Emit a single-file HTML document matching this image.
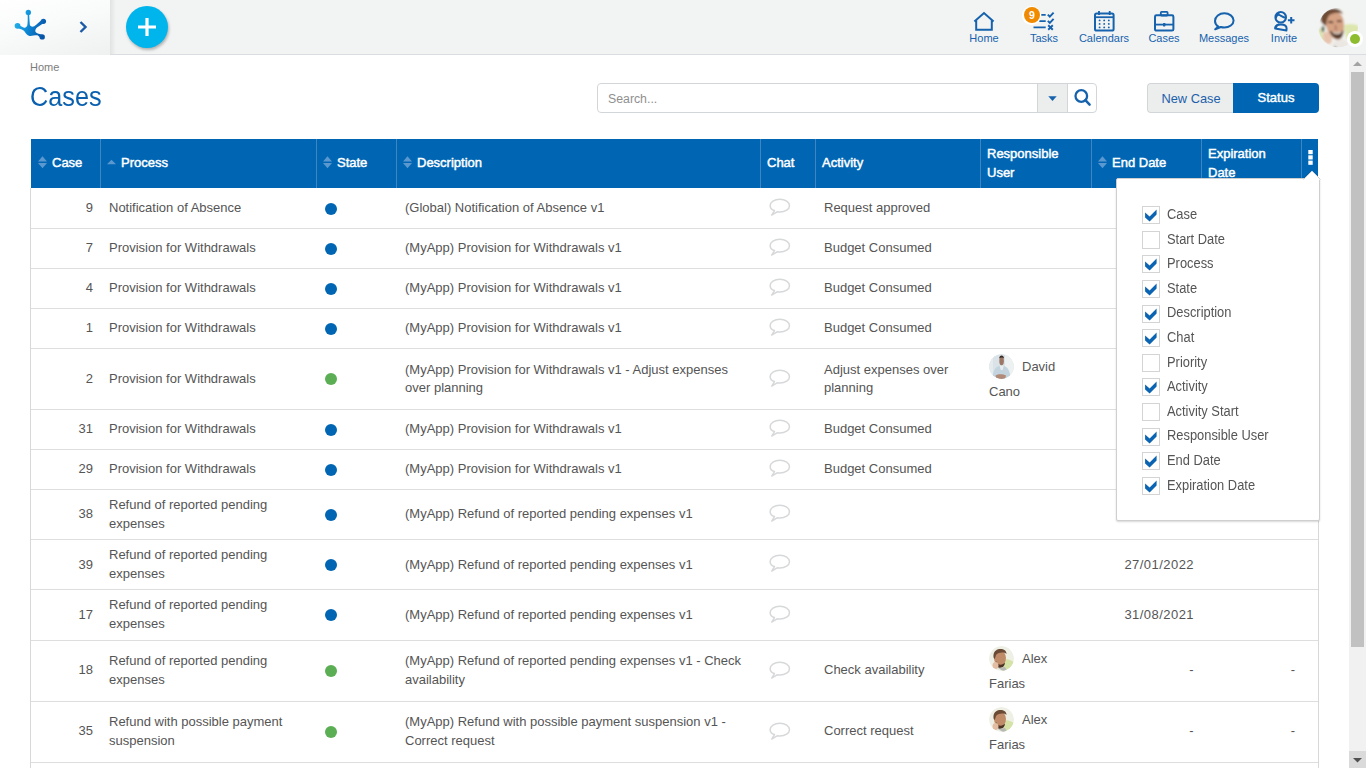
<!DOCTYPE html>
<html><head><meta charset="utf-8"><style>
*{box-sizing:border-box;margin:0;padding:0}
html,body{width:1366px;height:768px;overflow:hidden;background:#fff;font-family:"Liberation Sans",sans-serif;color:#555}
.abs{position:absolute}
#topbar{position:absolute;left:0;top:0;width:1366px;height:55px;background:#f2f4f4;border-bottom:1px solid #d8dde1}
#leftpanel{position:absolute;left:0;top:0;width:110px;height:55px;background:linear-gradient(165deg,#ffffff 0%,#f9fafa 45%,#eff1f1 100%)}
.nav{position:absolute;top:0;width:60px;height:54px;text-align:center;color:#1662ad;font-size:11px}
.nav svg{position:absolute;top:11px}
.nav span{position:absolute;left:0;right:0;top:32px;text-align:center;line-height:12px}
#crumb{left:30px;top:61px;font-size:11px;color:#7d7d7d;line-height:13px}
#title{left:30px;top:81.6px;font-size:27px;transform:scaleX(0.935);transform-origin:0 0;color:#0a60ae;line-height:30px;white-space:nowrap}
#search{left:597px;top:83px;width:500px;height:30px;border:1px solid #d3d6d9;border-radius:4px;background:#fff}
#search .ph{position:absolute;left:10px;top:8px;font-size:12.3px;color:#8f8f8f;line-height:15px}
#search .dd{position:absolute;left:439px;top:0;width:31px;height:28px;background:#eceeee;border-left:1px solid #d3d6d9;border-right:1px solid #d3d6d9}
#btns{left:1147px;top:83px;width:172px;height:30px}
#newcase{position:absolute;left:0;top:0;width:87px;height:30px;background:#eceeee;border:1px solid #d3d6d9;border-right:none;border-radius:4px 0 0 4px;color:#1b60aa;font-size:12.8px;text-align:center;line-height:29.5px}
#status{position:absolute;left:86px;top:0;width:86px;height:30px;background:#0066b3;border-radius:0 4px 4px 0;color:#fff;font-size:13px;text-align:center;line-height:30px;-webkit-text-stroke:0.4px #fff}
#thead{left:31px;top:139px;width:1287px;height:49px;background:#0066b3}
.th{position:absolute;top:0;height:49px;border-right:1px solid #3f85c2;color:#fff;font-weight:normal;font-size:13px;-webkit-text-stroke:0.45px #fff}
.th .l{position:absolute;top:16px;line-height:15px;white-space:nowrap}
.th .l2{position:absolute;top:4.5px;line-height:19px;white-space:nowrap}
.sort{position:absolute;top:16.6px}
#tbody{left:30px;top:188px;width:1289px;height:580px;border-left:1px solid #d8d8d8;border-right:1px solid #d8d8d8}
.row{position:absolute;left:0;width:1287px;border-bottom:1px solid #dedede}
.c{position:absolute;font-size:13px;color:#555;line-height:19px;white-space:nowrap}
.dot{position:absolute;width:12px;height:12px;border-radius:50%}
.blue{background:#0066b3}
.green{background:#5cae55}
#scroll{left:1349px;top:55px;width:17px;height:713px;background:#f1f1f1}
#thumb{left:1351px;top:72px;width:13px;height:575px;background:#c1c1c1}
#menu{left:1116px;top:178px;width:204px;height:343px;background:#fff;border:1px solid #cfcfcf;border-radius:2px;box-shadow:0 1px 2px rgba(0,0,0,.16)}
.mi{position:absolute;left:25px;font-size:13px;color:#555}
.mi .cb{position:absolute;left:0;top:0;width:18px;height:18px;border:1px solid #d4d4d4;background:#fff}
.mi .tx{position:absolute;left:25px;top:-0.2px;white-space:nowrap;line-height:16px;font-size:14px;transform:scaleX(0.92);transform-origin:0 0}
.av{position:absolute;width:25px;height:25px;border-radius:50%;overflow:hidden}
</style></head><body>
<div id="topbar"></div><div id="leftpanel"></div><div class="abs" style="left:110px;top:0;width:6px;height:54px;background:linear-gradient(90deg,rgba(0,0,0,.07),rgba(0,0,0,0))"></div>
<svg class="abs" style="left:14px;top:9px" width="34" height="33" viewBox="0 0 34 33">
<defs><linearGradient id="lg" gradientUnits="userSpaceOnUse" x1="2" y1="14" x2="30" y2="24"><stop offset="0" stop-color="#22ade9"/><stop offset="0.45" stop-color="#0b86d3"/><stop offset="1" stop-color="#0853a8"/></linearGradient></defs>
<g fill="url(#lg)">
<circle cx="14.3" cy="3.4" r="2.65"/>
<circle cx="29.4" cy="12.3" r="2.65"/>
<circle cx="3.5" cy="16.8" r="2.85"/>
<circle cx="28.2" cy="27.9" r="2.7"/>
<path d="M13.6 5.9 C13.9 9 13.7 14 13.3 16.4 C12.5 18.5 10.5 19 9.4 18.6 L4.8 16 L4.6 19.4 C7 20 9 20.8 10.2 22 C11.5 24 13 26.6 15.6 26.9 C18 27.2 21 26 23.5 26.3 L27.2 29.2 L29 26.2 C26 25 22.5 24.5 21.6 23.1 C20.8 21.8 21.6 19.8 23 18.6 L29 14.4 L27.8 10.8 C25 13 21.5 17 19.5 17.6 C17.5 18 16 17 15.8 15.5 C15.5 12 15.4 9 15.2 5.9 Z"/>
</g></svg>
<svg class="abs" style="left:78px;top:19.5px" width="12" height="14" viewBox="0 0 12 14"><path d="M2.5 2 L7.5 7 L2.5 12" fill="none" stroke="#1a5aa6" stroke-width="2.4"/></svg>
<div class="abs" style="left:126px;top:6px;width:42px;height:42px;border-radius:50%;background:#00b4ec;box-shadow:1px 2px 3px rgba(0,0,0,.28)"></div>
<svg class="abs" style="left:138px;top:18px" width="18" height="18" viewBox="0 0 18 18"><path d="M9 0 V18 M0 9 H18" stroke="#fff" stroke-width="3.2"/></svg>
<div class="nav" style="left:954px"><svg style="left:19px" width="22" height="21" viewBox="0 0 22 21"><path d="M1.4 10.4 L11 2 L20.6 10.4 M3.2 9 V18.7 H18.8 V9" fill="none" stroke="#1662ad" stroke-width="2"/></svg><span>Home</span></div>
<div class="nav" style="left:1014px"><svg style="left:19px" width="22" height="21" viewBox="0 0 22 21"><path d="M8.3 3.9 H12.7 M6.3 10.2 H12.7 M0.5 16.4 H12.7" stroke="#1662ad" stroke-width="1.8"/><path d="M14.8 3.6 L16.8 5.6 L20.6 1.6 M14.8 9.9 L16.8 11.9 L20.6 7.9" fill="none" stroke="#1662ad" stroke-width="1.9"/><path d="M15.2 14.3 L19.8 18.8 M19.8 14.3 L15.2 18.8" stroke="#1662ad" stroke-width="1.9"/></svg><span>Tasks</span></div>
<div class="nav" style="left:1074px"><svg style="left:20px" width="21" height="21" viewBox="0 0 21 21"><rect x="1" y="2.6" width="18.6" height="17" rx="1.6" fill="none" stroke="#1662ad" stroke-width="2"/><path d="M1 6.2 H19.6" stroke="#1662ad" stroke-width="1.8"/><path d="M5 0 V4 M15.7 0 V4" stroke="#1662ad" stroke-width="1.8"/><g fill="#1662ad"><circle cx="5.6" cy="9.4" r="0.95"/><circle cx="10.2" cy="9.4" r="0.95"/><circle cx="14.8" cy="9.4" r="0.95"/><circle cx="5.6" cy="12.9" r="0.95"/><circle cx="10.2" cy="12.9" r="0.95"/><circle cx="14.8" cy="12.9" r="0.95"/><circle cx="5.6" cy="16.4" r="0.95"/><circle cx="10.2" cy="16.4" r="0.95"/><circle cx="14.8" cy="16.4" r="0.95"/></g></svg><span>Calendars</span></div>
<div class="nav" style="left:1134px"><svg style="left:20px" width="21" height="21" viewBox="0 0 21 21"><rect x="1" y="4.3" width="18.4" height="15.3" rx="1.4" fill="none" stroke="#1662ad" stroke-width="2"/><path d="M1 13.6 H19.4" stroke="#1662ad" stroke-width="1.8"/><rect x="6.8" y="0.9" width="6.8" height="3.6" rx="0.8" fill="none" stroke="#1662ad" stroke-width="1.8"/><rect x="9" y="12" width="2.4" height="3.4" rx="0.6" fill="#1662ad"/></svg><span>Cases</span></div>
<div class="nav" style="left:1194px"><svg style="left:20px" width="21" height="20" viewBox="0 0 21 20"><path d="M4.4 15.6 C2.3 14.2 1 12.2 1 9.9 C1 5.6 5.3 2.2 10.3 2.2 C15.3 2.2 19.6 5.6 19.6 9.5 C19.6 13.5 15.3 16.5 10.3 16.5 C9 16.5 7.8 16.3 6.8 16 L1.2 18.3 Z" fill="none" stroke="#1662ad" stroke-width="2" stroke-linejoin="round"/></svg><span>Messages</span></div>
<div class="nav" style="left:1254px"><svg style="left:19px" width="23" height="21" viewBox="0 0 23 21"><circle cx="7.7" cy="6.3" r="5.3" fill="none" stroke="#1662ad" stroke-width="2"/><path d="M2.6 7.6 C3.3 5.2 4.4 3.7 5.9 3.9 C7.6 4.1 9.2 6.4 13.3 6.9" fill="none" stroke="#1662ad" stroke-width="1.8"/><path d="M2.2 7.4 C2.2 3.6 4.4 1.5 7.6 1.2 L5.6 3.4 C4.3 4.3 3.5 5.8 2.7 7.7 Z" fill="#1662ad"/><path d="M2.2 17.6 L13.4 19.5 L13.6 17.6 C13.6 15.2 11.6 13.6 8 13.6 C4.6 13.6 2.3 15.2 2.2 17.6 Z" fill="none" stroke="#1662ad" stroke-width="2" stroke-linejoin="round"/><path d="M1.3 17.6 C1.4 15 3.2 13 6.2 12.6 L3.4 17.2 Z" fill="#1662ad"/><path d="M18.2 6 V12.6 M14.9 9.3 H21.5" stroke="#1662ad" stroke-width="2"/></svg><span>Invite</span></div>
<div class="abs" style="left:1022.3px;top:5.6px;width:19px;height:19px;border-radius:50%;background:#fff"></div>
<div class="abs" style="left:1023.8px;top:7.1px;width:16px;height:16px;border-radius:50%;background:#f08a00;color:#fff;font-size:10.5px;font-weight:bold;text-align:center;line-height:16px">9</div>
<svg class="abs" style="left:1318px;top:7px" width="41" height="41" viewBox="0 0 41 41">
<defs><clipPath id="ac"><circle cx="20.2" cy="20.5" r="19.7"/></clipPath><filter id="bl" x="-20%" y="-20%" width="140%" height="140%"><feGaussianBlur stdDeviation="1.0"/></filter></defs>
<g clip-path="url(#ac)"><g filter="url(#bl)">
<rect x="-2" y="-2" width="45" height="45" fill="#f3f4f1"/>
<path d="M26 18 C32 16 40 17 42 20 L42 32 L28 32 Z" fill="#dde6ad"/>
<path d="M-1 22 C3 20 6 24 7 30 L6 40 L-1 40 Z" fill="#dfe4b5"/>
<path d="M13 42 C14 35 18 32 23 32 C28 32 31 36 32 42 Z" fill="#ebe7e2"/>
<path d="M17 39 L19 42 L16 42 Z" fill="#333"/>
<path d="M7 10 C7 6 11 4 16 4.5 C21 5 24.5 8 25.5 13 C26.5 19 26 26 24 30 C22 33 19 33.5 16.5 32 C13 30 10 26 8.5 21 C7.5 17 7 13 7 10 Z" fill="#d6a284"/>
<path d="M2.5 12 C3 5 9 1.5 15 1.5 C20 1.5 24 3.5 25 7 C21 5 15 5.5 11 8.5 C9 11 8.5 15 8 19 C6 18 3 16 2.5 12 Z" fill="#6e4b35"/>
<path d="M10.5 15.5 C12 14.6 13.6 14.8 15 15.8 M19 14.4 C20.5 13.8 22 13.9 23.5 14.6" stroke="#3f2a1e" stroke-width="1.7" fill="none"/>
<path d="M17 18 L18.5 22 L16.5 22.5" stroke="#8a5a40" stroke-width="1" fill="none"/>
<path d="M11.5 24 C13 29 17 32.5 21 32 C24 31.5 25.5 28 25.5 23 C23 26 19 26.5 15.5 25 C13.5 24.5 12.5 24 11.5 24 Z" fill="#5a4030"/>
<path d="M15 25.2 C17.5 26.6 20.5 26.6 23 25.2" stroke="#f2e8e0" stroke-width="1.3" fill="none"/>
<ellipse cx="9.5" cy="31" rx="4.2" ry="6.5" fill="#e7c3ae" transform="rotate(-20 9.5 31)"/>
<ellipse cx="5" cy="22" rx="1.6" ry="3" fill="#5d6a55"/>
</g></g></svg>
<div class="abs" style="left:1347px;top:31px;width:16px;height:16px;border-radius:50%;background:#fff"></div>
<div class="abs" style="left:1350px;top:34px;width:10px;height:10px;border-radius:50%;background:#8dbd2e"></div>
<div id="crumb" class="abs">Home</div><div id="title" class="abs">Cases</div>
<div id="search" class="abs"><span class="ph">Search...</span><div class="dd"></div>
<svg class="abs" style="left:450px;top:12px" width="9" height="6" viewBox="0 0 9 6"><path d="M0.3 0.2 H8.7 L4.5 4.9 Z" fill="#1662ad"/></svg>
<svg class="abs" style="left:475px;top:4px" width="19" height="19" viewBox="0 0 19 19"><circle cx="8.3" cy="8" r="5.8" fill="none" stroke="#1662ad" stroke-width="2.3"/><path d="M12.4 12.2 L16.6 16.6" stroke="#1662ad" stroke-width="2.5" stroke-linecap="round"/></svg>
</div>
<div id="btns" class="abs"><div id="newcase">New Case</div><div id="status">Status</div></div>
<div id="thead" class="abs"><div class="th" style="left:0px;width:70px;"><svg class="sort" style="left:6.5px" width="9" height="13" viewBox="0 0 9 13"><path d="M0 5.4 L4.5 0.2 L9 5.4 Z M0 7 L4.5 12.2 L9 7 Z" fill="#5b98cf"/></svg><span class="l" style="left:21px">Case</span></div><div class="th" style="left:69px;width:217px;"><svg class="sort" style="left:6.5px" width="9" height="13" viewBox="0 0 9 13"><path d="M0 8.3 L4.5 3.7 L9 8.3 Z" fill="#5b98cf"/></svg><span class="l" style="left:21px">Process</span></div><div class="th" style="left:285px;width:81px;"><svg class="sort" style="left:6.5px" width="9" height="13" viewBox="0 0 9 13"><path d="M0 5.4 L4.5 0.2 L9 5.4 Z M0 7 L4.5 12.2 L9 7 Z" fill="#5b98cf"/></svg><span class="l" style="left:21px">State</span></div><div class="th" style="left:365px;width:365px;"><svg class="sort" style="left:6.5px" width="9" height="13" viewBox="0 0 9 13"><path d="M0 5.4 L4.5 0.2 L9 5.4 Z M0 7 L4.5 12.2 L9 7 Z" fill="#5b98cf"/></svg><span class="l" style="left:21px">Description</span></div><div class="th" style="left:729px;width:56px;"><span class="l" style="left:7px">Chat</span></div><div class="th" style="left:784px;width:166px;"><span class="l" style="left:7px">Activity</span></div><div class="th" style="left:949px;width:112px;"><span class="l2" style="left:7px">Responsible<br>User</span></div><div class="th" style="left:1060px;width:111px;"><svg class="sort" style="left:6.5px" width="9" height="13" viewBox="0 0 9 13"><path d="M0 5.4 L4.5 0.2 L9 5.4 Z M0 7 L4.5 12.2 L9 7 Z" fill="#5b98cf"/></svg><span class="l" style="left:21px">End Date</span></div><div class="th" style="left:1170px;width:101px;"><span class="l2" style="left:7px">Expiration<br>Date</span></div><div class="th" style="left:1270px;width:17px;border-right:none;"></div><svg class="abs" style="left:1277px;top:11px" width="5" height="15" viewBox="0 0 5 15"><rect x="0.3" y="0" width="4.4" height="4.2" fill="#fff"/><rect x="0.3" y="5.3" width="4.4" height="4.2" fill="#fff"/><rect x="0.3" y="10.6" width="4.4" height="4.2" fill="#fff"/></svg></div>
<div id="tbody" class="abs"><div class="row" style="top:0px;height:41px"><div class="c" style="left:1px;width:61px;top:10px;text-align:right;">9</div><div class="c" style="left:78px;top:10px;text-align:left;">Notification of Absence</div><div class="dot blue" style="left:294px;top:14.5px"></div><div class="c" style="left:374px;top:10px;text-align:left;">(Global) Notification of Absence v1</div><svg class="abs" style="left:738px;top:10.1px" width="23" height="19" viewBox="0 0 23 19"><path transform="translate(0.3 0.1) scale(0.93)" d="M5.6 13.4 C2.7 12.5 0.9 10.6 0.9 8.2 C0.9 4.3 5.5 1.2 11.3 1.2 C17.1 1.2 21.7 4.3 21.7 8.2 C21.7 12 17.1 15 11.3 15 C10.3 15 9.3 14.9 8.4 14.7 L2.6 18.2 Z" fill="none" stroke="#d6d8da" stroke-width="1.6" stroke-linejoin="round"/></svg><div class="c" style="left:793px;top:10px;text-align:left;">Request approved</div></div><div class="row" style="top:40px;height:41px"><div class="c" style="left:1px;width:61px;top:10px;text-align:right;">7</div><div class="c" style="left:78px;top:10px;text-align:left;">Provision for Withdrawals</div><div class="dot blue" style="left:294px;top:14.5px"></div><div class="c" style="left:374px;top:10px;text-align:left;">(MyApp) Provision for Withdrawals v1</div><svg class="abs" style="left:738px;top:10.1px" width="23" height="19" viewBox="0 0 23 19"><path transform="translate(0.3 0.1) scale(0.93)" d="M5.6 13.4 C2.7 12.5 0.9 10.6 0.9 8.2 C0.9 4.3 5.5 1.2 11.3 1.2 C17.1 1.2 21.7 4.3 21.7 8.2 C21.7 12 17.1 15 11.3 15 C10.3 15 9.3 14.9 8.4 14.7 L2.6 18.2 Z" fill="none" stroke="#d6d8da" stroke-width="1.6" stroke-linejoin="round"/></svg><div class="c" style="left:793px;top:10px;text-align:left;">Budget Consumed</div></div><div class="row" style="top:80px;height:41px"><div class="c" style="left:1px;width:61px;top:10px;text-align:right;">4</div><div class="c" style="left:78px;top:10px;text-align:left;">Provision for Withdrawals</div><div class="dot blue" style="left:294px;top:14.5px"></div><div class="c" style="left:374px;top:10px;text-align:left;">(MyApp) Provision for Withdrawals v1</div><svg class="abs" style="left:738px;top:10.1px" width="23" height="19" viewBox="0 0 23 19"><path transform="translate(0.3 0.1) scale(0.93)" d="M5.6 13.4 C2.7 12.5 0.9 10.6 0.9 8.2 C0.9 4.3 5.5 1.2 11.3 1.2 C17.1 1.2 21.7 4.3 21.7 8.2 C21.7 12 17.1 15 11.3 15 C10.3 15 9.3 14.9 8.4 14.7 L2.6 18.2 Z" fill="none" stroke="#d6d8da" stroke-width="1.6" stroke-linejoin="round"/></svg><div class="c" style="left:793px;top:10px;text-align:left;">Budget Consumed</div></div><div class="row" style="top:120px;height:41px"><div class="c" style="left:1px;width:61px;top:10px;text-align:right;">1</div><div class="c" style="left:78px;top:10px;text-align:left;">Provision for Withdrawals</div><div class="dot blue" style="left:294px;top:14.5px"></div><div class="c" style="left:374px;top:10px;text-align:left;">(MyApp) Provision for Withdrawals v1</div><svg class="abs" style="left:738px;top:10.1px" width="23" height="19" viewBox="0 0 23 19"><path transform="translate(0.3 0.1) scale(0.93)" d="M5.6 13.4 C2.7 12.5 0.9 10.6 0.9 8.2 C0.9 4.3 5.5 1.2 11.3 1.2 C17.1 1.2 21.7 4.3 21.7 8.2 C21.7 12 17.1 15 11.3 15 C10.3 15 9.3 14.9 8.4 14.7 L2.6 18.2 Z" fill="none" stroke="#d6d8da" stroke-width="1.6" stroke-linejoin="round"/></svg><div class="c" style="left:793px;top:10px;text-align:left;">Budget Consumed</div></div><div class="row" style="top:160px;height:62px"><div class="c" style="left:1px;width:61px;top:21px;text-align:right;">2</div><div class="c" style="left:78px;top:21px;text-align:left;">Provision for Withdrawals</div><div class="dot green" style="left:294px;top:25.0px"></div><div class="c" style="left:374px;top:12.5px;text-align:left;line-height:18px;">(MyApp) Provision for Withdrawals v1 - Adjust expenses<br>over planning</div><svg class="abs" style="left:738px;top:20.6px" width="23" height="19" viewBox="0 0 23 19"><path transform="translate(0.3 0.1) scale(0.93)" d="M5.6 13.4 C2.7 12.5 0.9 10.6 0.9 8.2 C0.9 4.3 5.5 1.2 11.3 1.2 C17.1 1.2 21.7 4.3 21.7 8.2 C21.7 12 17.1 15 11.3 15 C10.3 15 9.3 14.9 8.4 14.7 L2.6 18.2 Z" fill="none" stroke="#d6d8da" stroke-width="1.6" stroke-linejoin="round"/></svg><div class="c" style="left:793px;top:12.5px;text-align:left;line-height:18px;">Adjust expenses over<br>planning</div><svg class="av" style="left:958px;top:6px" width="25" height="25" viewBox="0 0 25 25"><defs><clipPath id="cd4"><circle cx="12.5" cy="12.5" r="12.5"/></clipPath></defs><g clip-path="url(#cd4)"><rect width="25" height="25" fill="#d9e3e8"/><rect x="16" y="0" width="9" height="25" fill="#edf1f2"/><rect x="0" y="0" width="4" height="25" fill="#e6ecee"/><path d="M3.5 25 C4 15 7 12 12.5 11.5 C18 12 21 15 21.5 25 Z" fill="#c3d4de"/><path d="M10.5 11.5 L14.8 11.5 L13.5 16 L11.8 16 Z" fill="#e8eef0"/><ellipse cx="12.6" cy="7" rx="2.3" ry="4.2" fill="#9c7765"/><path d="M10.2 4.5 C10.2 0.5 15 0.5 15 4.5 C14 3 11.5 3 10.2 4.5 Z" fill="#3a2a22"/><path d="M6.5 21.5 C9 19.8 14 19.8 17 21.5 L16 25 L7.5 25 Z" fill="#b18a78"/></g></svg><div class="c" style="left:991px;top:9px">David</div><div class="c" style="left:958px;top:34px">Cano</div></div><div class="row" style="top:221px;height:41px"><div class="c" style="left:1px;width:61px;top:10px;text-align:right;">31</div><div class="c" style="left:78px;top:10px;text-align:left;">Provision for Withdrawals</div><div class="dot blue" style="left:294px;top:14.5px"></div><div class="c" style="left:374px;top:10px;text-align:left;">(MyApp) Provision for Withdrawals v1</div><svg class="abs" style="left:738px;top:10.1px" width="23" height="19" viewBox="0 0 23 19"><path transform="translate(0.3 0.1) scale(0.93)" d="M5.6 13.4 C2.7 12.5 0.9 10.6 0.9 8.2 C0.9 4.3 5.5 1.2 11.3 1.2 C17.1 1.2 21.7 4.3 21.7 8.2 C21.7 12 17.1 15 11.3 15 C10.3 15 9.3 14.9 8.4 14.7 L2.6 18.2 Z" fill="none" stroke="#d6d8da" stroke-width="1.6" stroke-linejoin="round"/></svg><div class="c" style="left:793px;top:10px;text-align:left;">Budget Consumed</div></div><div class="row" style="top:261px;height:41px"><div class="c" style="left:1px;width:61px;top:10px;text-align:right;">29</div><div class="c" style="left:78px;top:10px;text-align:left;">Provision for Withdrawals</div><div class="dot blue" style="left:294px;top:14.5px"></div><div class="c" style="left:374px;top:10px;text-align:left;">(MyApp) Provision for Withdrawals v1</div><svg class="abs" style="left:738px;top:10.1px" width="23" height="19" viewBox="0 0 23 19"><path transform="translate(0.3 0.1) scale(0.93)" d="M5.6 13.4 C2.7 12.5 0.9 10.6 0.9 8.2 C0.9 4.3 5.5 1.2 11.3 1.2 C17.1 1.2 21.7 4.3 21.7 8.2 C21.7 12 17.1 15 11.3 15 C10.3 15 9.3 14.9 8.4 14.7 L2.6 18.2 Z" fill="none" stroke="#d6d8da" stroke-width="1.6" stroke-linejoin="round"/></svg><div class="c" style="left:793px;top:10px;text-align:left;">Budget Consumed</div></div><div class="row" style="top:301px;height:51px"><div class="c" style="left:1px;width:61px;top:15px;text-align:right;">38</div><div class="c" style="left:78px;top:6.0px;text-align:left;line-height:19px;">Refund of reported pending<br>expenses</div><div class="dot blue" style="left:294px;top:19.5px"></div><div class="c" style="left:374px;top:15px;text-align:left;">(MyApp) Refund of reported pending expenses v1</div><svg class="abs" style="left:738px;top:15.1px" width="23" height="19" viewBox="0 0 23 19"><path transform="translate(0.3 0.1) scale(0.93)" d="M5.6 13.4 C2.7 12.5 0.9 10.6 0.9 8.2 C0.9 4.3 5.5 1.2 11.3 1.2 C17.1 1.2 21.7 4.3 21.7 8.2 C21.7 12 17.1 15 11.3 15 C10.3 15 9.3 14.9 8.4 14.7 L2.6 18.2 Z" fill="none" stroke="#d6d8da" stroke-width="1.6" stroke-linejoin="round"/></svg></div><div class="row" style="top:351px;height:51px"><div class="c" style="left:1px;width:61px;top:16px;text-align:right;">39</div><div class="c" style="left:78px;top:6.0px;text-align:left;line-height:19px;">Refund of reported pending<br>expenses</div><div class="dot blue" style="left:294px;top:19.5px"></div><div class="c" style="left:374px;top:16px;text-align:left;">(MyApp) Refund of reported pending expenses v1</div><svg class="abs" style="left:738px;top:15.1px" width="23" height="19" viewBox="0 0 23 19"><path transform="translate(0.3 0.1) scale(0.93)" d="M5.6 13.4 C2.7 12.5 0.9 10.6 0.9 8.2 C0.9 4.3 5.5 1.2 11.3 1.2 C17.1 1.2 21.7 4.3 21.7 8.2 C21.7 12 17.1 15 11.3 15 C10.3 15 9.3 14.9 8.4 14.7 L2.6 18.2 Z" fill="none" stroke="#d6d8da" stroke-width="1.6" stroke-linejoin="round"/></svg><div class="c" style="left:1063px;width:100px;top:16px;text-align:right;"><span style="letter-spacing:0.45px">27/01/2022</span></div></div><div class="row" style="top:401px;height:52px"><div class="c" style="left:1px;width:61px;top:16px;text-align:right;">17</div><div class="c" style="left:78px;top:6.0px;text-align:left;line-height:19px;">Refund of reported pending<br>expenses</div><div class="dot blue" style="left:294px;top:20.0px"></div><div class="c" style="left:374px;top:16px;text-align:left;">(MyApp) Refund of reported pending expenses v1</div><svg class="abs" style="left:738px;top:15.6px" width="23" height="19" viewBox="0 0 23 19"><path transform="translate(0.3 0.1) scale(0.93)" d="M5.6 13.4 C2.7 12.5 0.9 10.6 0.9 8.2 C0.9 4.3 5.5 1.2 11.3 1.2 C17.1 1.2 21.7 4.3 21.7 8.2 C21.7 12 17.1 15 11.3 15 C10.3 15 9.3 14.9 8.4 14.7 L2.6 18.2 Z" fill="none" stroke="#d6d8da" stroke-width="1.6" stroke-linejoin="round"/></svg><div class="c" style="left:1063px;width:100px;top:16px;text-align:right;"><span style="letter-spacing:0.45px">31/08/2021</span></div></div><div class="row" style="top:452px;height:62px"><div class="c" style="left:1px;width:61px;top:20px;text-align:right;">18</div><div class="c" style="left:78px;top:11.0px;text-align:left;line-height:19px;">Refund of reported pending<br>expenses</div><div class="dot green" style="left:294px;top:25.0px"></div><div class="c" style="left:374px;top:11.0px;text-align:left;line-height:19px;">(MyApp) Refund of reported pending expenses v1 - Check<br>availability</div><svg class="abs" style="left:738px;top:20.6px" width="23" height="19" viewBox="0 0 23 19"><path transform="translate(0.3 0.1) scale(0.93)" d="M5.6 13.4 C2.7 12.5 0.9 10.6 0.9 8.2 C0.9 4.3 5.5 1.2 11.3 1.2 C17.1 1.2 21.7 4.3 21.7 8.2 C21.7 12 17.1 15 11.3 15 C10.3 15 9.3 14.9 8.4 14.7 L2.6 18.2 Z" fill="none" stroke="#d6d8da" stroke-width="1.6" stroke-linejoin="round"/></svg><div class="c" style="left:793px;top:20px;text-align:left;">Check availability</div><svg class="av" style="left:958px;top:6px" width="25" height="25" viewBox="0 0 25 25"><defs><clipPath id="ca10"><circle cx="12.5" cy="12.5" r="12.5"/></clipPath></defs><g clip-path="url(#ca10)"><rect width="25" height="25" fill="#eef0e6"/><path d="M14 14 C18 12 22 14 25 16 L25 25 L14 25 Z" fill="#d5e2a8"/><ellipse cx="11" cy="12" rx="6" ry="7.5" fill="#c08b68"/><path d="M4.5 9 C5 4 9 2.5 13 3 C16 3.5 17.5 5.5 17.5 8 C15 6 10 6 7 9 C6.5 11 6 12 5.5 13 C4.5 12 4.3 10.5 4.5 9 Z" fill="#6a4a35"/><path d="M7 15 C8.5 19 13 20 16 16.5 C16 19 14 22 11 22 C8.5 22 7.2 19 7 15 Z" fill="#4d3526"/><ellipse cx="6.5" cy="19.5" rx="3" ry="3.5" fill="#e2bda2"/><path d="M9 22 L14 25 L18 25 L16 21 Z" fill="#b7b9b3"/></g></svg><div class="c" style="left:991px;top:9px">Alex</div><div class="c" style="left:958px;top:34px">Farias</div><div class="c" style="left:1063px;width:100px;top:20px;text-align:right;"><span style="letter-spacing:0.45px">-</span></div><div class="c" style="left:1164px;width:100px;top:20px;text-align:right;">-</div></div><div class="row" style="top:513px;height:62px"><div class="c" style="left:1px;width:61px;top:20px;text-align:right;">35</div><div class="c" style="left:78px;top:11.0px;text-align:left;line-height:19px;">Refund with possible payment<br>suspension</div><div class="dot green" style="left:294px;top:25.0px"></div><div class="c" style="left:374px;top:11.0px;text-align:left;line-height:19px;">(MyApp) Refund with possible payment suspension v1 -<br>Correct request</div><svg class="abs" style="left:738px;top:20.6px" width="23" height="19" viewBox="0 0 23 19"><path transform="translate(0.3 0.1) scale(0.93)" d="M5.6 13.4 C2.7 12.5 0.9 10.6 0.9 8.2 C0.9 4.3 5.5 1.2 11.3 1.2 C17.1 1.2 21.7 4.3 21.7 8.2 C21.7 12 17.1 15 11.3 15 C10.3 15 9.3 14.9 8.4 14.7 L2.6 18.2 Z" fill="none" stroke="#d6d8da" stroke-width="1.6" stroke-linejoin="round"/></svg><div class="c" style="left:793px;top:20px;text-align:left;">Correct request</div><svg class="av" style="left:958px;top:6px" width="25" height="25" viewBox="0 0 25 25"><defs><clipPath id="ca11"><circle cx="12.5" cy="12.5" r="12.5"/></clipPath></defs><g clip-path="url(#ca11)"><rect width="25" height="25" fill="#eef0e6"/><path d="M14 14 C18 12 22 14 25 16 L25 25 L14 25 Z" fill="#d5e2a8"/><ellipse cx="11" cy="12" rx="6" ry="7.5" fill="#c08b68"/><path d="M4.5 9 C5 4 9 2.5 13 3 C16 3.5 17.5 5.5 17.5 8 C15 6 10 6 7 9 C6.5 11 6 12 5.5 13 C4.5 12 4.3 10.5 4.5 9 Z" fill="#6a4a35"/><path d="M7 15 C8.5 19 13 20 16 16.5 C16 19 14 22 11 22 C8.5 22 7.2 19 7 15 Z" fill="#4d3526"/><ellipse cx="6.5" cy="19.5" rx="3" ry="3.5" fill="#e2bda2"/><path d="M9 22 L14 25 L18 25 L16 21 Z" fill="#b7b9b3"/></g></svg><div class="c" style="left:991px;top:9px">Alex</div><div class="c" style="left:958px;top:34px">Farias</div><div class="c" style="left:1063px;width:100px;top:20px;text-align:right;"><span style="letter-spacing:0.45px">-</span></div><div class="c" style="left:1164px;width:100px;top:20px;text-align:right;">-</div></div><div class="row" style="top:574px;height:51px"></div></div>
<div id="menu" class="abs"><div class="mi" style="top:27.2px"><div class="cb"><svg class="abs" style="left:0px;top:0px" width="16" height="16" viewBox="0 0 16 16"><path d="M2.1 5.5 L6.6 9.4 L13.6 2.6 L13.6 7.5 L6.6 14.4 L2.1 10.4 Z" fill="#0b64b1"/></svg></div><span class="tx">Case</span></div><div class="mi" style="top:51.8px"><div class="cb"></div><span class="tx">Start Date</span></div><div class="mi" style="top:76.4px"><div class="cb"><svg class="abs" style="left:0px;top:0px" width="16" height="16" viewBox="0 0 16 16"><path d="M2.1 5.5 L6.6 9.4 L13.6 2.6 L13.6 7.5 L6.6 14.4 L2.1 10.4 Z" fill="#0b64b1"/></svg></div><span class="tx">Process</span></div><div class="mi" style="top:101.0px"><div class="cb"><svg class="abs" style="left:0px;top:0px" width="16" height="16" viewBox="0 0 16 16"><path d="M2.1 5.5 L6.6 9.4 L13.6 2.6 L13.6 7.5 L6.6 14.4 L2.1 10.4 Z" fill="#0b64b1"/></svg></div><span class="tx">State</span></div><div class="mi" style="top:125.6px"><div class="cb"><svg class="abs" style="left:0px;top:0px" width="16" height="16" viewBox="0 0 16 16"><path d="M2.1 5.5 L6.6 9.4 L13.6 2.6 L13.6 7.5 L6.6 14.4 L2.1 10.4 Z" fill="#0b64b1"/></svg></div><span class="tx">Description</span></div><div class="mi" style="top:150.2px"><div class="cb"><svg class="abs" style="left:0px;top:0px" width="16" height="16" viewBox="0 0 16 16"><path d="M2.1 5.5 L6.6 9.4 L13.6 2.6 L13.6 7.5 L6.6 14.4 L2.1 10.4 Z" fill="#0b64b1"/></svg></div><span class="tx">Chat</span></div><div class="mi" style="top:174.8px"><div class="cb"></div><span class="tx">Priority</span></div><div class="mi" style="top:199.4px"><div class="cb"><svg class="abs" style="left:0px;top:0px" width="16" height="16" viewBox="0 0 16 16"><path d="M2.1 5.5 L6.6 9.4 L13.6 2.6 L13.6 7.5 L6.6 14.4 L2.1 10.4 Z" fill="#0b64b1"/></svg></div><span class="tx">Activity</span></div><div class="mi" style="top:224.0px"><div class="cb"></div><span class="tx">Activity Start</span></div><div class="mi" style="top:248.6px"><div class="cb"><svg class="abs" style="left:0px;top:0px" width="16" height="16" viewBox="0 0 16 16"><path d="M2.1 5.5 L6.6 9.4 L13.6 2.6 L13.6 7.5 L6.6 14.4 L2.1 10.4 Z" fill="#0b64b1"/></svg></div><span class="tx">Responsible User</span></div><div class="mi" style="top:273.2px"><div class="cb"><svg class="abs" style="left:0px;top:0px" width="16" height="16" viewBox="0 0 16 16"><path d="M2.1 5.5 L6.6 9.4 L13.6 2.6 L13.6 7.5 L6.6 14.4 L2.1 10.4 Z" fill="#0b64b1"/></svg></div><span class="tx">End Date</span></div><div class="mi" style="top:297.8px"><div class="cb"><svg class="abs" style="left:0px;top:0px" width="16" height="16" viewBox="0 0 16 16"><path d="M2.1 5.5 L6.6 9.4 L13.6 2.6 L13.6 7.5 L6.6 14.4 L2.1 10.4 Z" fill="#0b64b1"/></svg></div><span class="tx">Expiration Date</span></div></div>
<svg class="abs" style="left:1303px;top:170px" width="19" height="10" viewBox="0 0 19 10"><path d="M0.5 9.5 L9 1 L17.5 9.5" fill="#fff" stroke="#d0d0d0" stroke-width="1"/><rect x="1.5" y="9" width="15" height="2" fill="#fff"/></svg>
<div id="scroll" class="abs"></div><div id="thumb" class="abs"></div>
<svg class="abs" style="left:1352px;top:60px" width="11" height="7" viewBox="0 0 11 7"><path d="M1 6 L5.5 1.5 L10 6 Z" fill="#a3a3a3"/></svg>
<div class="abs" style="left:1349px;top:751px;width:17px;height:17px;background:#dadada"></div>
<svg class="abs" style="left:1352px;top:757px" width="11" height="7" viewBox="0 0 11 7"><path d="M1 1 L5.5 5.5 L10 1 Z" fill="#505050"/></svg>
</body></html>
